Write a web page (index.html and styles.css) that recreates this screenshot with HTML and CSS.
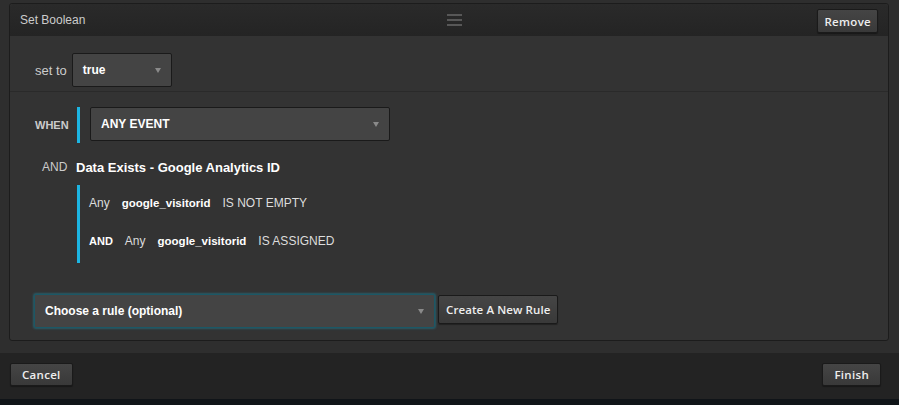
FILE: index.html
```html
<!DOCTYPE html>
<html lang="en">
<head>
    <meta charset="UTF-8">
    <title>Set Boolean</title>
    <link rel="stylesheet" href="styles.css">
</head>
<body>

<!-- Action card -->
<div class="card">
    <div class="card-header">
        <span class="card-title">Set Boolean</span>
        <span class="handle">
            <svg width="15" height="12" viewBox="0 0 15 12">
                <rect x="0" y="0" width="15" height="2" fill="#575757"/>
                <rect x="0" y="5" width="15" height="2" fill="#575757"/>
                <rect x="0" y="10" width="15" height="2" fill="#575757"/>
            </svg>
        </span>
        <button class="btn btn-tight">Remove</button>
    </div>

    <!-- Value -->
    <div class="set-row">
        <span class="field-label">set to</span>
        <div class="select select-value"><span>true</span><i class="caret"></i></div>
    </div>

    <!-- Conditions -->
    <div class="rules">
        <div class="when-row">
            <span class="when-label">WHEN</span>
            <div class="when-box">
                <div class="select select-event"><span>ANY EVENT</span><i class="caret"></i></div>
            </div>
        </div>

        <div class="and-row">
            <span class="and-label">AND</span>
            <span class="rule-title">Data Exists - Google Analytics ID</span>
        </div>

        <div class="conditions">
            <div class="cond">
                <span>Any</span>
                <span class="attr">google_visitorid</span>
                <span>IS NOT EMPTY</span>
            </div>
            <div class="cond">
                <span class="cond-and">AND</span>
                <span>Any</span>
                <span class="attr">google_visitorid</span>
                <span>IS ASSIGNED</span>
            </div>
        </div>
    </div>

    <!-- Extra rule -->
    <div class="rule-row">
        <div class="select select-rule"><span>Choose a rule (optional)</span><i class="caret"></i></div>
        <button class="btn btn-rule">Create A New Rule</button>
    </div>
</div>

<!-- Dialog buttons -->
<div class="footer">
    <button class="btn">Cancel</button>
    <button class="btn">Finish</button>
</div>

</body>
</html>
```

FILE: styles.css
```css
body {
    margin: 0;
    background-color: #2e2e2e;
    font-family: "Liberation Sans", Arial, sans-serif;
    color: #ddd;
}
.card {
    box-sizing: border-box;
    width: 880px;
    margin: 3px 0 0 9px;
    background-color: #333;
    border: 1px solid #1c1c1c;
    border-radius: 3px;
}
.card-header {
    height: 32px;
    display: flex;
    align-items: center;
    padding: 0 10px;
    background: linear-gradient(#2a2a2a, #242424);
    border-radius: 3px 3px 0 0;
}
.card-title {
    font-size: 12px;
    color: #ccc;
}
.handle {
    flex: 1;
    display: flex;
    justify-content: center;
    padding-left: 7px;
}
.btn {
    box-sizing: border-box;
    height: 23px;
    padding: 0 11px;
    background: linear-gradient(#454545, #393939);
    border: 1px solid #1a1a1a;
    border-radius: 2px;
    box-shadow: 0 1px 1px rgba(0, 0, 0, 0.35);
    color: #eee;
    font-family: "Open Sans", sans-serif;
    font-weight: 600;
    font-size: 11.5px;
    letter-spacing: 0.3px;
    cursor: pointer;
}
.btn-tight {
    height: 24px;
    padding: 0 6px;
    margin-top: 2px;
}
.btn-rule {
    height: 29px;
    margin-top: 1px;
    padding: 0 7px;
    letter-spacing: 0.1px;
}
.set-row {
    display: flex;
    align-items: center;
    padding: 17px 0 4px 25px;
    border-bottom: 1px solid #2a2a2a;
}
.field-label {
    font-size: 13px;
    color: #ccc;
    margin-right: 5px;
}
.select {
    box-sizing: border-box;
    height: 34px;
    display: flex;
    align-items: center;
    justify-content: space-between;
    padding: 0 10px;
    background-color: #444;
    border: 1px solid #1a1a1a;
    border-radius: 2px;
    color: #fff;
    font-weight: 700;
    font-size: 12px;
}
.caret {
    width: 0;
    height: 0;
    border-left: 3.5px solid transparent;
    border-right: 3.5px solid transparent;
    border-top: 5px solid #8a8a8a;
}
.select-value {
    width: 100px;
}
.select-event {
    width: 300px;
}
.select-rule {
    width: 401px;
    border-color: #1b5866;
    box-shadow: 0 0 2px 1px rgba(30, 140, 165, 0.45);
}
.rules {
    padding: 15px 0 0 25px;
}
.when-row {
    display: flex;
    align-items: center;
}
.when-label {
    width: 42px;
    font-size: 11px;
    font-weight: 700;
    color: #ccc;
}
.when-box {
    height: 36px;
    padding-left: 10px;
    border-left: 3px solid #1cb5e2;
}
.and-row {
    display: flex;
    align-items: center;
    height: 16px;
    margin-top: 16px;
}
.and-label {
    width: 34px;
    margin-left: 7px;
    font-size: 12px;
    color: #ccc;
}
.rule-title {
    font-size: 13px;
    font-weight: 700;
    color: #fff;
}
.conditions {
    margin: 10px 0 0 42px;
    padding: 0 0 2px 9px;
    border-left: 3px solid #1cb5e2;
}
.cond {
    display: flex;
    align-items: center;
    gap: 12px;
    height: 36px;
    margin-bottom: 2px;
    font-size: 12px;
    color: #ddd;
}
.attr {
    font-weight: 700;
    font-size: 11.5px;
    color: #fff;
}
.cond-and {
    font-weight: 700;
    font-size: 11px;
    color: #fff;
}
.rule-row {
    display: flex;
    align-items: flex-start;
    gap: 3px;
    padding: 31px 0 12px 24px;
}
.footer {
    box-sizing: border-box;
    height: 52px;
    margin-top: 12px;
    display: flex;
    justify-content: space-between;
    align-items: flex-start;
    padding: 10px 18px 0 10px;
    background-color: #232323;
    border-bottom: 6px solid #101418;
}
```
